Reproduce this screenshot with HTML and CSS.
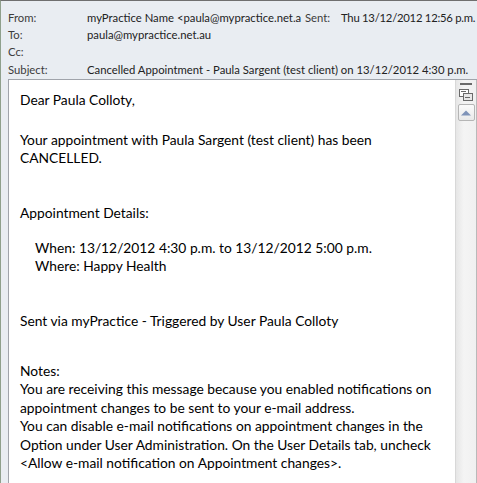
FILE: index.html
```html
<!DOCTYPE html>
<html>
<head>
<meta charset="utf-8">
<link rel="stylesheet" href="styles.css">
</head>
<body>
<div class="window">
  <div class="header">
    <div class="row">
      <span class="label">From:</span>
      <span class="value from">myPractice Name &lt;paula@mypractice.net.a</span>
      <span class="label sent">Sent:</span>
      <span class="value sentval">Thu 13/12/2012 12:56 p.m.</span>
    </div>
    <div class="row">
      <span class="label">To:</span>
      <span class="value">paula@mypractice.net.au</span>
    </div>
    <div class="row">
      <span class="label">Cc:</span>
      <span class="value"></span>
    </div>
    <div class="row subject">
      <span class="label">Subject:</span>
      <span class="value">Cancelled Appointment - Paula Sargent (test client) on 13/12/2012 4:30 p.m.</span>
    </div>
  </div>
  <div class="bodybox">
    <div class="message">
      <p>Dear Paula Colloty,</p>
      <p class="g-your">Your appointment with Paula Sargent (test client) has been<br>CANCELLED.</p>
      <p class="g-big">Appointment Details:</p>
      <p class="g-when indent">When: 13/12/2012 4:30 p.m. to 13/12/2012 5:00 p.m.<br>Where: Happy Health</p>
      <p class="g-big">Sent via myPractice - Triggered by User Paula Colloty</p>
      <p class="g-notes">Notes:<br>You are receiving this message because you enabled notifications on<br>appointment changes to be sent to your e-mail address.<br>You can disable e-mail notifications on appointment changes in the<br>Option under User Administration. On the User Details tab, uncheck<br>&lt;Allow e-mail notification on Appointment changes&gt;.</p>
    </div>
    <div class="scrollbar">
      <div class="sb-top">
        <div class="sb-dash"></div>
        <svg class="sb-icon" width="16" height="14" viewBox="0 0 16 14">
          <rect x="1.5" y="1.5" width="9" height="7" fill="#fff" stroke="#6a6a6a"/>
          <rect x="5.5" y="5.5" width="9" height="7" fill="#e8e8e8" stroke="#6a6a6a"/>
          <path d="M3 3.5h5M7 9.5h5" stroke="#6a6a6a"/>
        </svg>
      </div>
      <div class="sb-btn">
        <svg width="12" height="7" viewBox="0 0 12 7"><path d="M1 6.5L6 1.5L11 6.5Z" fill="#7f93b8"/></svg>
      </div>
    </div>
  </div>
</div>
</body>
</html>
```
FILE: styles.css
```css
html, body {
  margin: 0;
  padding: 0;
  background: #e9edf2;
}
.window {
  width: 477px;
  height: 483px;
  box-sizing: border-box;
  border-top: 1px solid #6f6f6f;
  border-left: 1px solid #8fa08c;
  background: #e9edf2;
  display: flex;
  flex-direction: column;
  overflow: hidden;
}
.header {
  padding: 8px 0 0 7px;
  font-family: "Lato", "Liberation Sans", sans-serif;
  font-size: 11.3px;
  color: #333;
  height: 78px;
  flex: none;
  box-sizing: border-box;
}
.row {
  display: flex;
  height: 17px;
  line-height: 17px;
  white-space: nowrap;
}
.row.subject { margin-top: 1px; }
.label {
  width: 79px;
  flex: none;
  color: #3c3c3c;
}
.value { color: #222; }
.from { width: 218px; overflow: hidden; flex: none; }
.label.sent { width: 36px; }
.sentval { letter-spacing: -0.25px; }
.bodybox {
  flex: 1;
  margin-left: 7px;
  border-top: 1px solid #a0a4ab;
  border-left: 1px solid #a0a4ab;
  background: #fff;
  display: flex;
  min-height: 0;
}
.message {
  flex: 1;
  padding: 11px 0 0 11px;
  font-family: "Lato", "Liberation Sans", sans-serif;
  font-size: 13.8px;
  line-height: 18.4px;
  color: #000;
}
.message p { margin: 0; white-space: nowrap; }
.message .g-your { margin-top: 21.6px; }
.message .g-big { margin-top: 36.2px; }
.message .g-when { margin-top: 16.6px; }
.message .g-notes { margin-top: 31.6px; }
.indent { padding-left: 15px; }
.scrollbar {
  width: 20px;
  flex: none;
  background: linear-gradient(to right, #e6e6e6, #f4f4f4 40%, #f0f0f0);
  border-left: 1px solid #d8d8d8;
  border-right: 1px solid #b9b9b9;
  display: flex;
  flex-direction: column;
  align-items: center;
}
.sb-top {
  height: 24px;
  display: flex;
  flex-direction: column;
  align-items: center;
  padding-top: 3px;
  box-sizing: border-box;
}
.sb-dash {
  width: 12px;
  height: 2px;
  background: #6a6a6a;
  margin-bottom: 3px;
}
.sb-btn {
  width: 17px;
  height: 17px;
  box-sizing: border-box;
  border: 1px solid #b5b5b5;
  border-radius: 2px;
  background: linear-gradient(#fbfbfb, #e9e9e9);
  display: flex;
  align-items: center;
  justify-content: center;
}
```
